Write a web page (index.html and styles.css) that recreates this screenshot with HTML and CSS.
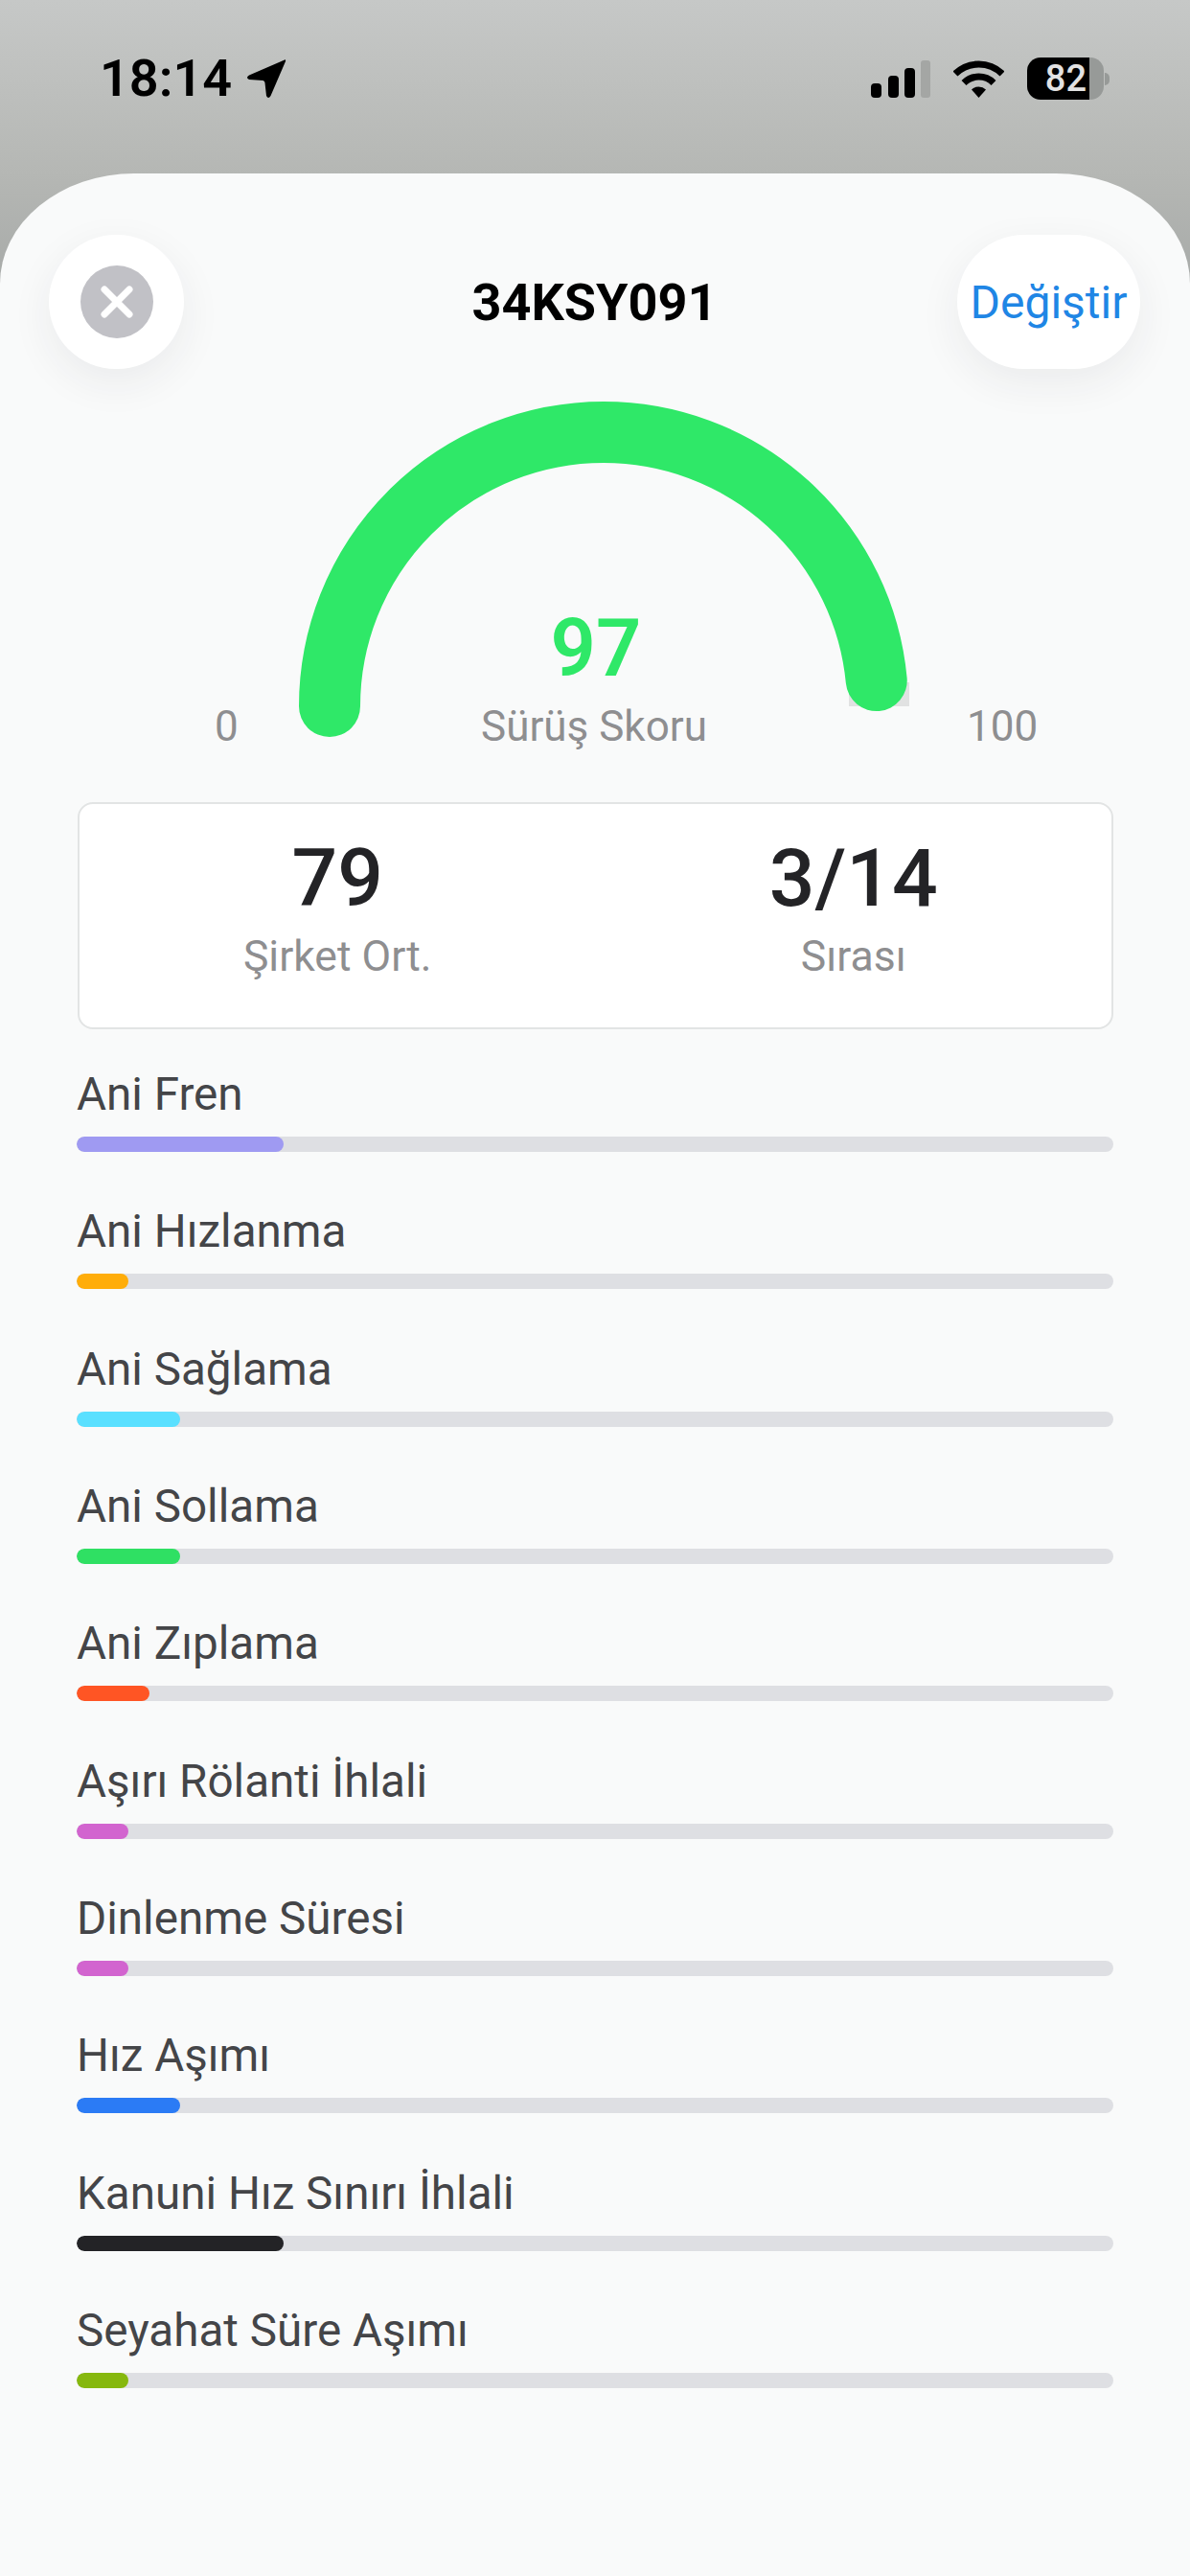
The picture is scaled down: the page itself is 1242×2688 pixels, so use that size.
FILE: index.html

```html
<!DOCTYPE html>
<html lang="tr">
<head>
  <meta charset="UTF-8">
  <meta name="viewport" content="width=device-width, initial-scale=1">
  <title>Sürüş Skoru</title>
  <link rel="stylesheet" href="styles.css">
</head>
<body>
  <div class="status-bar">
    <div class="status-left">
      <span class="time">18:14</span>
      <svg class="arrow" width="42" height="42" viewBox="0 0 42 42">
        <path d="M40 1.5 L3 17.5 Q-1 20 3 22 L17.5 23 Q19.5 23.5 19.5 25.5 L21 39 Q23 43 25.5 39 L41 3 Q41.5 .5 40 1.5 Z" fill="#000"/>
      </svg>
    </div>
    <div class="status-right">
      <svg width="62" height="39" viewBox="0 0 62 39">
        <rect x="0" y="24" width="11" height="15" rx="4" fill="#000"/>
        <rect x="18" y="16" width="11" height="23" rx="4" fill="#000"/>
        <rect x="35" y="8" width="11" height="31" rx="4" fill="#000"/>
        <rect x="52" y="0" width="10" height="39" rx="3" fill="#a4a6a4"/>
      </svg>
      <svg width="53" height="39" viewBox="0 0 53 39">
        <path d="M2 14 A35 35 0 0 1 51 14" fill="none" stroke="#000" stroke-width="7"/>
        <path d="M11 23.5 A22 22 0 0 1 42 23.5" fill="none" stroke="#000" stroke-width="7"/>
        <path d="M19 30.5 A11 11 0 0 1 34 30.5 L26.5 39 Z" fill="#000"/>
      </svg>
      <div class="battery">
        <div class="battery-body">
          <div class="battery-fill">82</div>
          <div class="battery-rest"></div>
        </div>
        <div class="battery-nub"></div>
      </div>
    </div>
  </div>

  <div class="sheet">
    <div class="header">
      <button class="close-btn">
        <svg width="76" height="76" viewBox="0 0 76 76">
          <circle cx="38" cy="38" r="38" fill="#c1c1c6"/>
          <path d="M25 25 L51 51 M51 25 L25 51" stroke="#fff" stroke-width="7" stroke-linecap="round"/>
        </svg>
      </button>
      <div class="plate">34KSY091</div>
      <button class="change-btn">Değiştir</button>
    </div>

    <div class="gauge">
      <svg class="gauge-arc" width="1242" height="452" viewBox="0 385 1242 452">
        <rect x="886" y="712" width="63" height="25" fill="#e1e2e2"/>
        <path d="M344 737 A286 286 0 0 1 916 737" pathLength="100" stroke-dasharray="97 100" fill="none" stroke="#2fe868" stroke-width="64" stroke-linecap="round"/>
      </svg>
      <div class="gauge-score">97</div>
      <div class="gauge-label">Sürüş Skoru</div>
      <div class="gauge-min">0</div>
      <div class="gauge-max">100</div>
    </div>

    <div class="stats">
      <div class="stat">
        <div class="stat-value">79</div>
        <div class="stat-label">Şirket Ort.</div>
      </div>
      <div class="stat">
        <div class="stat-value">3/14</div>
        <div class="stat-label">Sırası</div>
      </div>
    </div>

    <div class="events">
      <div class="event">
        <div class="event-name">Ani Fren</div>
        <div class="track"><div class="fill" style="width: 20%; background-color: #9f9af2"></div></div>
      </div>
      <div class="event">
        <div class="event-name">Ani Hızlanma</div>
        <div class="track"><div class="fill" style="width: 5%; background-color: #ffad0a"></div></div>
      </div>
      <div class="event">
        <div class="event-name">Ani Sağlama</div>
        <div class="track"><div class="fill" style="width: 10%; background-color: #5ae0ff"></div></div>
      </div>
      <div class="event">
        <div class="event-name">Ani Sollama</div>
        <div class="track"><div class="fill" style="width: 10%; background-color: #2fe063"></div></div>
      </div>
      <div class="event">
        <div class="event-name">Ani Zıplama</div>
        <div class="track"><div class="fill" style="width: 7%; background-color: #ff5524"></div></div>
      </div>
      <div class="event">
        <div class="event-name">Aşırı Rölanti İhlali</div>
        <div class="track"><div class="fill" style="width: 5%; background-color: #d264cf"></div></div>
      </div>
      <div class="event">
        <div class="event-name">Dinlenme Süresi</div>
        <div class="track"><div class="fill" style="width: 5%; background-color: #d264cf"></div></div>
      </div>
      <div class="event">
        <div class="event-name">Hız Aşımı</div>
        <div class="track"><div class="fill" style="width: 10%; background-color: #2b7bf5"></div></div>
      </div>
      <div class="event">
        <div class="event-name">Kanuni Hız Sınırı İhlali</div>
        <div class="track"><div class="fill" style="width: 20%; background-color: #232326"></div></div>
      </div>
      <div class="event">
        <div class="event-name">Seyahat Süre Aşımı</div>
        <div class="track"><div class="fill" style="width: 5%; background-color: #86b80e"></div></div>
      </div>
    </div>
  </div>
</body>
</html>
```

FILE: styles.css

```css
* {
  box-sizing: border-box;
}

html, body {
  height: 2688px;
}

body {
  margin: 0;
  overflow: hidden;
  font-family: Roboto, "Liberation Sans", sans-serif;
  background: linear-gradient(#c6c8c7 0, #b5b7b4 181px, #a7aaa8 300px);
  display: flex;
  flex-direction: column;
}

.status-bar {
  height: 181px;
  flex: none;
  display: flex;
  justify-content: space-between;
  padding: 60px 84px 0 104px;
}

.status-left {
  display: flex;
  align-items: center;
  gap: 15px;
  height: 44px;
}

.time {
  font-size: 54px;
  font-weight: 600;
  line-height: 44px;
  color: #000;
}

.status-right {
  display: flex;
  align-items: center;
  gap: 24px;
  height: 44px;
}

.battery {
  display: flex;
  align-items: center;
  gap: 1px;
}

.battery-body {
  display: flex;
  width: 80px;
  height: 44px;
  border-radius: 14px;
  overflow: hidden;
}

.battery-fill {
  width: 65px;
  background-color: #000;
  color: #e2e2e2;
  font-size: 38px;
  font-weight: 500;
  line-height: 44px;
  text-align: right;
  padding-right: 3px;
}

.battery-rest {
  flex: 1;
  background-color: #979a98;
}

.battery-nub {
  width: 5px;
  height: 13px;
  background-color: #979a98;
  border-radius: 0 6px 6px 0;
}

.sheet {
  flex: 1;
  background-color: #f9fafa;
  border-radius: 140px 140px 0 0 / 115px 115px 0 0;
}

.header {
  display: grid;
  grid-template-columns: 1fr auto 1fr;
  align-items: center;
  padding: 64px 52px 0 51px;
}

.close-btn, .change-btn {
  height: 140px;
  border: none;
  border-radius: 70px;
  background-color: #fff;
  box-shadow: 0 14px 44px rgba(40, 40, 60, 0.07);
  font-family: inherit;
  padding: 0;
}

.close-btn {
  width: 141px;
  justify-self: start;
  display: flex;
  align-items: center;
  justify-content: center;
}

.change-btn {
  width: 191px;
  justify-self: end;
  color: #1f86e5;
  font-size: 48px;
}

.plate {
  font-size: 54px;
  font-weight: 700;
  color: #000;
}

.gauge {
  position: relative;
  height: 452px;
}

.gauge-arc {
  display: block;
}

.gauge-score, .gauge-label, .gauge-min, .gauge-max {
  position: absolute;
  line-height: 1;
}

.gauge-score {
  left: 0;
  width: 1244px;
  top: 250px;
  text-align: center;
  font-size: 83px;
  font-weight: 600;
  color: #2fe868;
}

.gauge-label, .gauge-min, .gauge-max {
  top: 351px;
  font-size: 44px;
  color: #8e8e90;
}

.gauge-label {
  left: 0;
  width: 1240px;
  text-align: center;
}

.gauge-min {
  left: 224px;
}

.gauge-max {
  left: 1009px;
}

.stats {
  display: flex;
  height: 237px;
  margin: 0 80px 0 81px;
  padding-top: 36px;
  background-color: #fff;
  border: 2px solid #e2e4e4;
  border-radius: 16px;
}

.stat {
  flex: 1;
  text-align: center;
}

.stat-value {
  font-size: 84px;
  font-weight: 500;
  line-height: 84px;
  color: #232326;
}

.stat-label {
  margin-top: 14px;
  font-size: 44.5px;
  line-height: 50px;
  color: #8e8e90;
}

.events {
  display: flex;
  flex-direction: column;
  gap: 57.33px;
  margin: 42px 80px 0;
}

.event-name {
  font-size: 47.6px;
  line-height: 52px;
  color: #444548;
}

.track {
  height: 16px;
  margin-top: 18px;
  background-color: #dedfe3;
  border-radius: 8px;
  overflow: hidden;
}

.fill {
  height: 100%;
  border-radius: 8px;
}
```
